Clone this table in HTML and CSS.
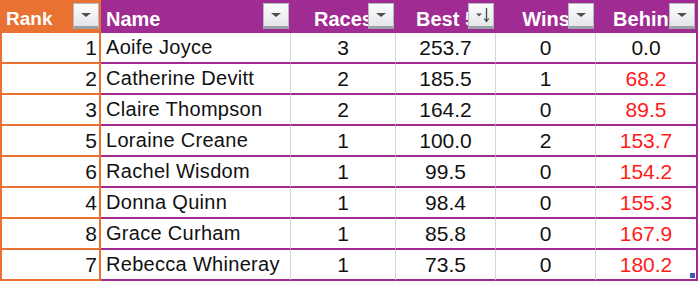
FILE: index.html
```html
<!DOCTYPE html>
<html>
<head>
<meta charset="utf-8">
<link rel="stylesheet" href="styles.css">
</head>
<body>
<div class="table">
  <div class="row head">
    <div class="hcell rank-h">Rank<span class="fbtn"><span class="tri"></span></span></div>
    <div class="hcell name-h">Name<span class="fbtn"><span class="tri"></span></span></div>
    <div class="hcell ctr">Races<span class="fbtn"><span class="tri"></span></span></div>
    <div class="hcell ctr">Best 5<span class="fbtn"><svg class="sort" width="24" height="24" viewBox="0 0 24 24"><path d="M7 10.5h6l-3 3z" fill="#555"/><path d="M17.5 5v13" stroke="#444" stroke-width="1.3"/><path d="M15.3 15.5l2.2 3 2.2-3" fill="none" stroke="#444" stroke-width="1.2"/></svg></span></div>
    <div class="hcell ctr">Wins<span class="fbtn"><span class="tri"></span></span></div>
    <div class="hcell ctr last">Behind<span class="fbtn"><span class="tri"></span></span></div>
  </div>
  <div class="row"><div class="c rank">1</div><div class="c name">Aoife Joyce</div><div class="c num">3</div><div class="c num">253.7</div><div class="c num">0</div><div class="c num end">0.0</div></div>
  <div class="row"><div class="c rank">2</div><div class="c name">Catherine Devitt</div><div class="c num">2</div><div class="c num">185.5</div><div class="c num">1</div><div class="c num end red">68.2</div></div>
  <div class="row"><div class="c rank">3</div><div class="c name">Claire Thompson</div><div class="c num">2</div><div class="c num">164.2</div><div class="c num">0</div><div class="c num end red">89.5</div></div>
  <div class="row"><div class="c rank">5</div><div class="c name">Loraine Creane</div><div class="c num">1</div><div class="c num">100.0</div><div class="c num">2</div><div class="c num end red">153.7</div></div>
  <div class="row"><div class="c rank">6</div><div class="c name">Rachel Wisdom</div><div class="c num">1</div><div class="c num">99.5</div><div class="c num">0</div><div class="c num end red">154.2</div></div>
  <div class="row"><div class="c rank">4</div><div class="c name">Donna Quinn</div><div class="c num">1</div><div class="c num">98.4</div><div class="c num">0</div><div class="c num end red">155.3</div></div>
  <div class="row"><div class="c rank">8</div><div class="c name">Grace Curham</div><div class="c num">1</div><div class="c num">85.8</div><div class="c num">0</div><div class="c num end red">167.9</div></div>
  <div class="row"><div class="c rank">7</div><div class="c name">Rebecca Whineray</div><div class="c num">1</div><div class="c num">73.5</div><div class="c num">0</div><div class="c num end red">180.2<span class="handle"></span></div></div>
</div>
</body>
</html>
```
FILE: styles.css
```css
html, body {
  margin: 0;
  padding: 0;
  background: #ffffff;
}
.table {
  width: 698px;
  font-family: "Liberation Sans", Arial, sans-serif;
}
.row {
  display: grid;
  grid-template-columns: 101px 190px 105px 100px 100px 102px;
  height: 31px;
}
.row.head {
  height: 33px;
}
.hcell {
  position: relative;
  background: #A02B93;
  color: #ffffff;
  font-weight: bold;
  font-size: 20px;
  line-height: 22px;
  padding-top: 8px;
  white-space: nowrap;
  overflow: hidden;
  box-sizing: border-box;
}
.rank-h {
  background: #E97132;
  padding-left: 6px;
  font-size: 19px;
}
.name-h {
  padding-left: 5px;
}
.ctr {
  text-align: center;
}
.fbtn {
  position: absolute;
  top: 3px;
  right: 2px;
  width: 26px;
  height: 26px;
  box-sizing: border-box;
  border: 1px solid #b4b9c0;
  border-bottom: 3px solid #9ba1a8;
  background: linear-gradient(#fdfdfe, #e4e6ea);
  display: flex;
  justify-content: center;
  padding-top: 9px;
}
.last .fbtn {
  right: 3px;
}
.tri {
  width: 0;
  height: 0;
  border-left: 5px solid transparent;
  border-right: 5px solid transparent;
  border-top: 4px solid #4f4f4f;
}
.sort {
  position: absolute;
  left: 0;
  top: -1px;
}
.c {
  position: relative;
  box-sizing: border-box;
  font-size: 21px;
  line-height: 29px;
  color: #111111;
  white-space: nowrap;
  border-bottom: 2px solid #A02B93;
  border-right: 1px solid #d6d6d6;
}
.rank {
  border-left: 2px solid #E97132;
  border-right: 2px solid #E97132;
  border-bottom: 2px solid #E97132;
  text-align: right;
  padding-right: 2px;
}
.name {
  padding-left: 5px;
  font-size: 20px;
  letter-spacing: 0.3px;
}
.num {
  text-align: center;
}
.end {
  border-right: 2px solid #A02B93;
}
.red {
  color: #ff1a1a;
}
.handle {
  position: absolute;
  right: 1px;
  bottom: 1px;
  width: 5px;
  height: 5px;
  background: #4659b8;
}
```
